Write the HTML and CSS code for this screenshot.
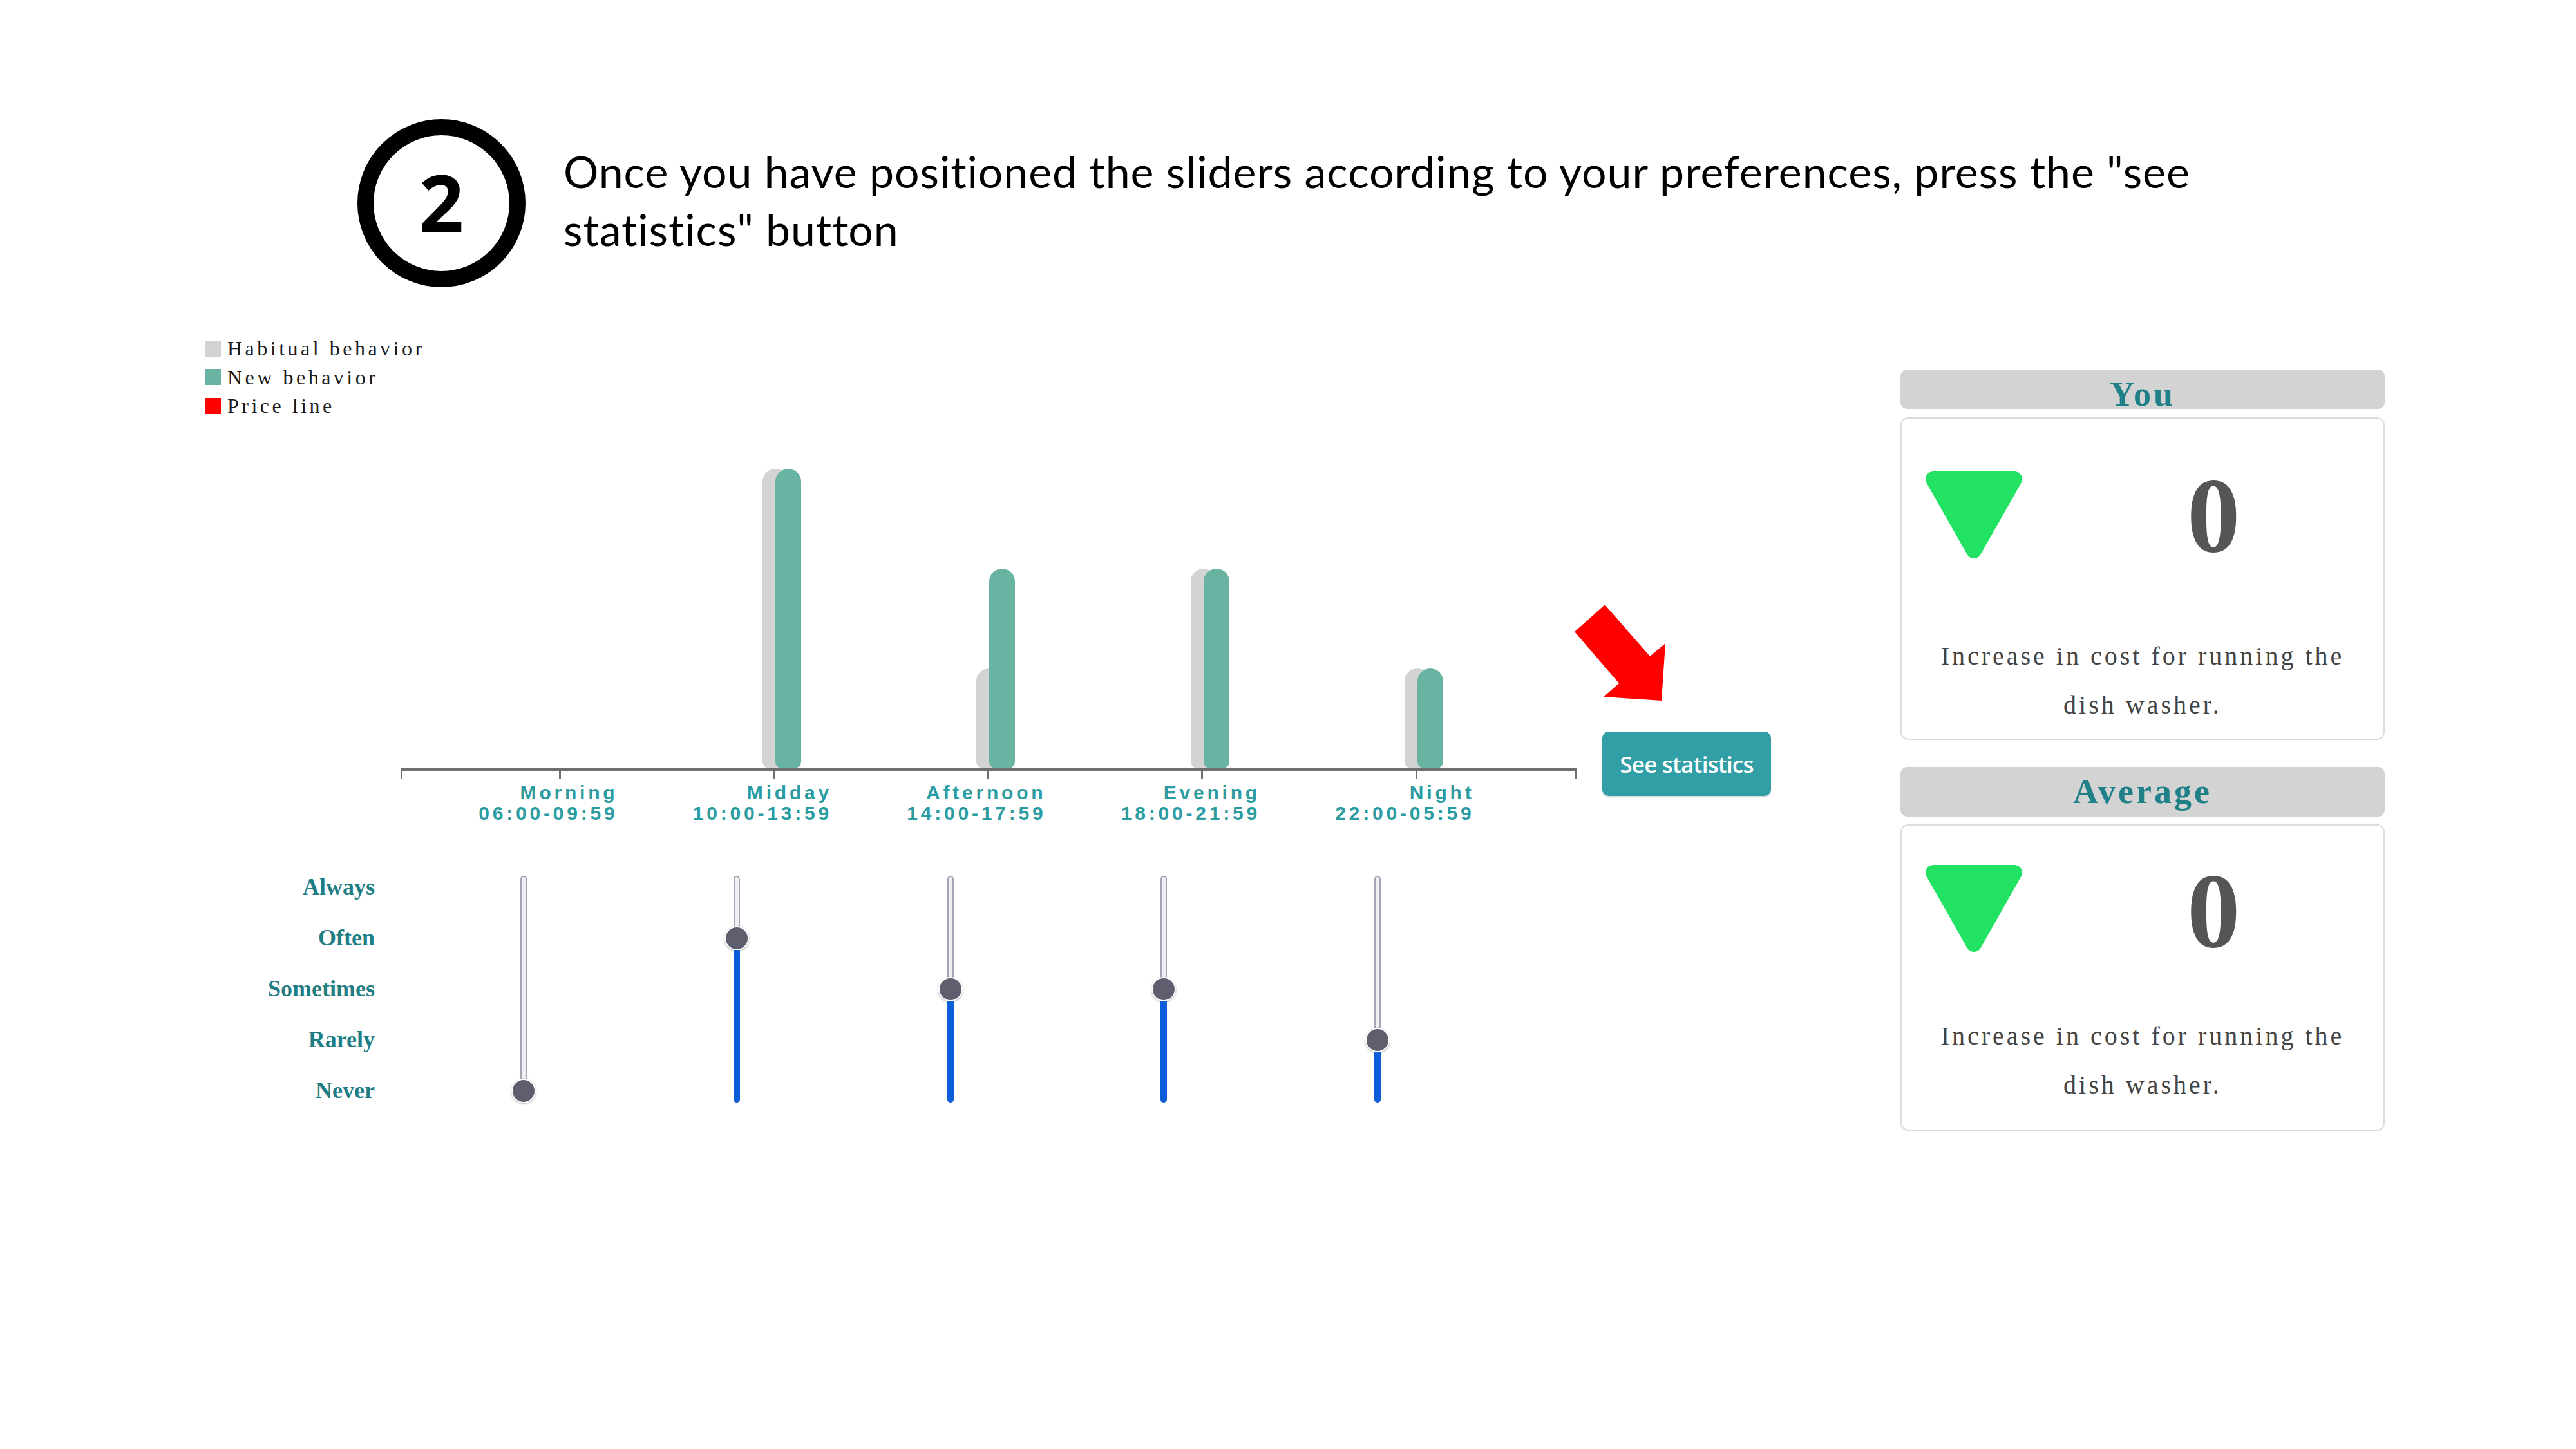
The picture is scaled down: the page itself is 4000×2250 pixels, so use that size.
FILE: index.html
```html
<!DOCTYPE html>
<html lang="en">
<head>
<meta charset="utf-8">
<title>See statistics</title>
<link rel="stylesheet" href="styles.css">
</head>
<body>
<header class="intro">
  <div class="step"><span>2</span></div>
  <p class="instruction">Once you have positioned the sliders according to your preferences, press the "see statistics" button</p>
</header>
<main class="main">
  <section class="viz">
    <ul class="legend">
      <li><span class="swatch swatch-habit"></span>Habitual behavior</li>
      <li><span class="swatch swatch-new"></span>New behavior</li>
      <li><span class="swatch swatch-price"></span>Price line</li>
    </ul>
    <div class="chart-row">
      <div class="chart">
        <div class="plot">
          <div class="slot"><div class="bar bar-habit" style="height:0px"></div><div class="bar bar-new" style="height:0px"></div></div>
          <div class="slot"><div class="bar bar-habit" style="height:465px"></div><div class="bar bar-new" style="height:465px"></div></div>
          <div class="slot"><div class="bar bar-habit" style="height:155px"></div><div class="bar bar-new" style="height:310px"></div></div>
          <div class="slot"><div class="bar bar-habit" style="height:310px"></div><div class="bar bar-new" style="height:310px"></div></div>
          <div class="slot"><div class="bar bar-habit" style="height:155px"></div><div class="bar bar-new" style="height:155px"></div></div>
        </div>
        <div class="axis">
          <span class="tick"></span><span class="tick"></span><span class="tick"></span><span class="tick"></span><span class="tick"></span>
        </div>
        <div class="xlabels">
          <div class="xlabel">Morning<br>06:00-09:59</div>
          <div class="xlabel">Midday<br>10:00-13:59</div>
          <div class="xlabel">Afternoon<br>14:00-17:59</div>
          <div class="xlabel">Evening<br>18:00-21:59</div>
          <div class="xlabel">Night<br>22:00-05:59</div>
        </div>
      </div>
      <div class="cta">
        <svg class="arrow" viewBox="0 0 146 153" width="146" height="153" aria-hidden="true">
          <polygon points="49,2 2,44 71,124 47,145 137,151 143,62 119,82" fill="#ff0000"/>
        </svg>
        <button class="see-stats" type="button">See statistics</button>
      </div>
    </div>
    <div class="levels">
      <div class="level-names">
        <div>Always</div>
        <div>Often</div>
        <div>Sometimes</div>
        <div>Rarely</div>
        <div>Never</div>
      </div>
      <div class="sliders">
        <div class="slider"><div class="track"><span class="thumb"></span><span class="fill" style="height:0px"></span></div></div>
        <div class="slider"><div class="track"><span class="thumb"></span><span class="fill" style="height:237px"></span></div></div>
        <div class="slider"><div class="track"><span class="thumb"></span><span class="fill" style="height:158px"></span></div></div>
        <div class="slider"><div class="track"><span class="thumb"></span><span class="fill" style="height:158px"></span></div></div>
        <div class="slider"><div class="track"><span class="thumb"></span><span class="fill" style="height:79px"></span></div></div>
      </div>
    </div>
  </section>
  <aside class="cards">
    <div class="card-head card-head-you">You</div>
    <div class="card-body card-body-you">
      <div class="stat-row">
        <svg class="tri tri-you" viewBox="0 0 150 135" width="150" height="135" aria-hidden="true">
          <polygon points="12,12 138,12 75,123" fill="#21e262" stroke="#21e262" stroke-width="24" stroke-linejoin="round"/>
        </svg>
        <div class="value">0</div>
      </div>
      <p class="desc desc-you">Increase in cost for running the dish washer.</p>
    </div>
    <div class="card-head card-head-avg">Average</div>
    <div class="card-body card-body-avg">
      <div class="stat-row">
        <svg class="tri tri-avg" viewBox="0 0 150 135" width="150" height="135" aria-hidden="true">
          <polygon points="12,12 138,12 75,123" fill="#21e262" stroke="#21e262" stroke-width="24" stroke-linejoin="round"/>
        </svg>
        <div class="value">0</div>
      </div>
      <p class="desc desc-avg">Increase in cost for running the dish washer.</p>
    </div>
  </aside>
</main>
</body>
</html>
```

FILE: styles.css
```css
* { box-sizing: border-box; }

html, body {
  margin: 0;
  padding: 0;
  background: #ffffff;
}

body {
  width: 4000px;
  height: 2250px;
  overflow: hidden;
  font-family: "Liberation Serif", "Times New Roman", serif;
  color: #222;
}

/* ---------- intro ---------- */
.intro {
  display: flex;
  align-items: center;
  padding: 185px 0 0 555px;
}

.step {
  width: 261px;
  height: 261px;
  flex: none;
  border: 25px solid #000;
  border-radius: 50%;
  display: flex;
  align-items: center;
  justify-content: center;
  font-family: "Open Sans", "Liberation Sans", sans-serif;
  font-weight: 700;
  font-size: 122px;
  line-height: 1;
  color: #000;
  padding-bottom: 6px;
}

.instruction {
  margin: 0 0 10px 59px;
  max-width: 2640px;
  font-family: Lato, "Open Sans", sans-serif;
  font-size: 68px;
  line-height: 90px;
  letter-spacing: 0.95px;
  color: #000;
}

/* ---------- main ---------- */
.main {
  display: flex;
  align-items: flex-start;
  margin-top: 73px;
  padding-left: 318px;
}

.viz {
  display: flex;
  flex-direction: column;
  flex: none;
}

.legend {
  list-style: none;
  margin: 0;
  padding: 0;
}

.legend li {
  display: flex;
  align-items: center;
  height: 44.5px;
  font-size: 32px;
  line-height: 44.5px;
  letter-spacing: 4.5px;
  color: #1a1a1a;
}

.swatch {
  width: 25px;
  height: 25px;
  margin-right: 10px;
  flex: none;
}
.swatch-habit { background: #d3d3d3; }
.swatch-new { background: #69b3a2; }
.swatch-price { background: #ff0000; }

/* ---------- chart ---------- */
.chart-row {
  display: flex;
  align-items: flex-end;
}

.chart {
  width: 1827px;
  margin-left: 304px;
  flex: none;
}

.plot {
  height: 540.5px;
  display: grid;
  grid-template-columns: repeat(5, 332.5px);
  padding: 0 84px 0 81px;
}

.slot {
  display: flex;
  align-items: flex-end;
  padding-left: 148px;
  height: 100%;
}

.bar {
  width: 40px;
  flex: none;
  border-radius: 20px 20px 10px 10px;
}
.bar-habit { background: #d3d3d3; }
.bar-new { background: #69b3a2; margin-left: -20px; }

.axis {
  height: 16px;
  border-top: 4px solid #6f6f6f;
  border-left: 3px solid #6f6f6f;
  border-right: 3px solid #6f6f6f;
  display: grid;
  grid-template-columns: repeat(5, 332.5px);
  padding: 0 81px 0 78px;
}

.tick {
  width: 3px;
  height: 12px;
  background: #6f6f6f;
  justify-self: center;
}

.xlabels {
  margin-top: 6px;
  display: grid;
  grid-template-columns: repeat(5, 332.5px);
  padding: 0 84px 0 81px;
}

.xlabel {
  text-align: right;
  padding-right: 76px;
  font-family: "Liberation Sans", Arial, sans-serif;
  font-weight: 700;
  font-size: 30px;
  line-height: 32px;
  letter-spacing: 4.8px;
  color: #2b9ca2;
  white-space: nowrap;
}

.cta {
  display: flex;
  flex-direction: column;
  margin-left: 39px;
  margin-bottom: 43px;
  flex: none;
}

.arrow {
  display: block;
  margin-left: -45px;
  margin-bottom: 46px;
}

.see-stats {
  width: 262px;
  height: 100px;
  border: none;
  border-radius: 10px;
  background: #329fa7;
  color: #ffffff;
  font-family: "Open Sans", "Liberation Sans", sans-serif;
  font-weight: 600;
  font-size: 35px;
  letter-spacing: -0.8px;
  padding: 0;
  box-shadow: 0 2px 2px rgba(0, 0, 0, 0.15);
}

/* ---------- sliders ---------- */
.levels {
  display: flex;
  margin-top: 59px;
}

.level-names {
  width: 264px;
  text-align: right;
  font-weight: 700;
  font-size: 36px;
  line-height: 79px;
  color: #1f7e85;
}

.sliders {
  margin-left: 65px;
  display: grid;
  grid-template-columns: repeat(5, 331.5px);
}

.slider {
  display: flex;
  justify-content: center;
}

.track {
  margin-top: 22px;
  width: 10px;
  height: 352px;
  border-radius: 5px;
  background: #efeff4;
  box-shadow: inset 0 0 0 2px #a4a4b4;
  display: flex;
  flex-direction: column;
  align-items: center;
  justify-content: flex-end;
}

.thumb {
  width: 38px;
  height: 38px;
  flex: none;
  margin-top: -1px;
  margin-bottom: -1px;
  border-radius: 50%;
  background: #5e5e6e;
  border: 2px solid #ffffff;
  box-shadow: 0 1px 3px rgba(0, 0, 0, 0.35);
}

.fill {
  width: 10px;
  flex: none;
  background: #0b5ed7;
  border-radius: 0 0 5px 5px;
}

/* ---------- cards ---------- */
.cards {
  width: 752px;
  flex: none;
  margin-left: 201px;
  padding-top: 55px;
}

.card-head {
  background: #d3d3d3;
  border-radius: 10px;
  text-align: center;
  font-weight: 700;
  font-size: 54px;
  line-height: 77px;
  letter-spacing: 4px;
  color: #1f8088;
}
.card-head-you { height: 61px; margin-bottom: 13px; }
.card-head-avg { height: 77px; margin-top: 42px; margin-bottom: 12px; }

.card-body {
  border: 2px solid #dcdcdc;
  border-radius: 12px;
}
.card-body-you { padding: 68px 0 14px; }
.card-body-avg { padding: 50px 0 31px; }

.stat-row {
  display: flex;
  align-items: flex-start;
  padding-left: 37px;
}

.tri { display: block; flex: none; }
.tri-you { margin-top: 14px; }
.tri-avg { margin-top: 11px; }

.value {
  margin-left: 256px;
  font-weight: 700;
  font-size: 165px;
  line-height: 165px;
  color: #555555;
}

.desc {
  margin: 0;
  padding: 0 40px;
  text-align: center;
  font-size: 40px;
  line-height: 76px;
  letter-spacing: 4px;
  color: #444444;
}
.desc-you { margin-top: 98px; }
.desc-avg { margin-top: 74px; }
```
